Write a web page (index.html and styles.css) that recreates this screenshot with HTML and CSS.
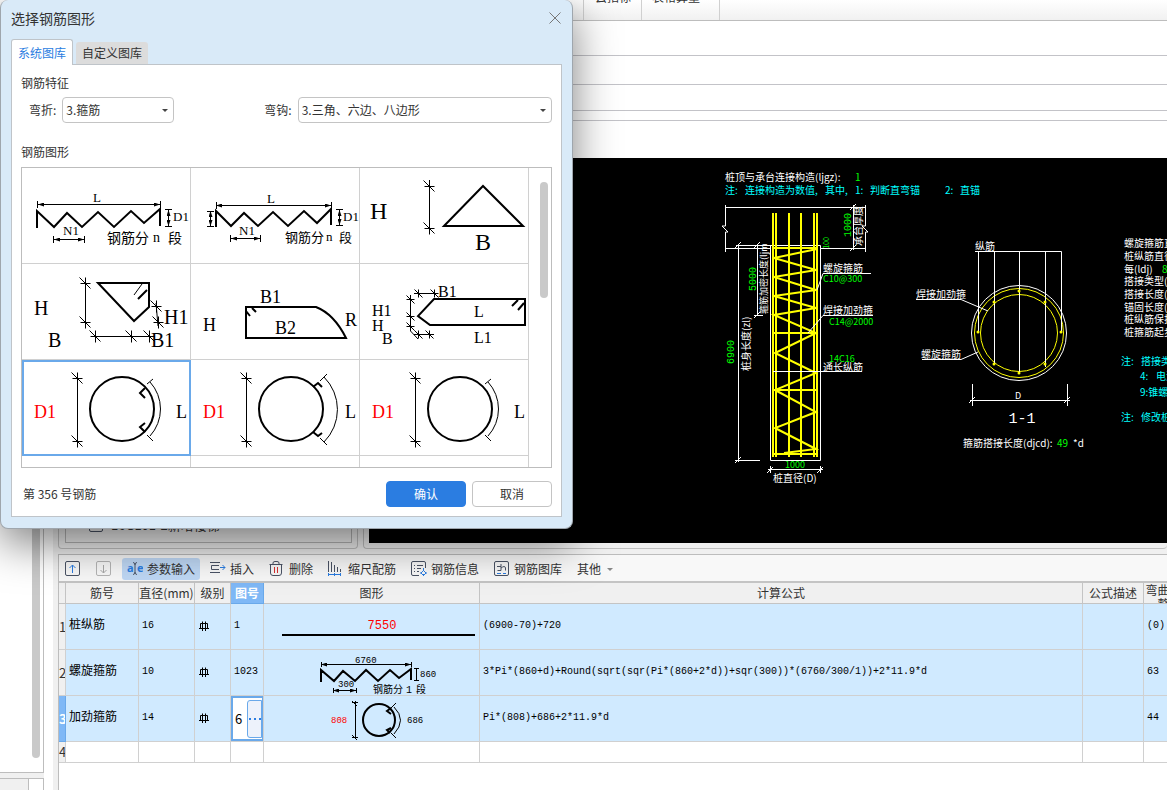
FILE: index.html
```html
<!DOCTYPE html>
<html lang="zh-CN">
<head>
    <meta charset="UTF-8">
    <title>选择钢筋图形</title>
    <link rel="stylesheet" href="styles.css">
</head>
<body>
    <!-- 公用尺寸标注符号 -->
    <svg class="defs" width="0" height="0">
        <defs>
            <g id="tick"><path d="M-5 0H5M0-6V6M-6-6L5 5"/></g>
            <g id="tick-s"><path d="M-4 0H4M0-4V4M-4-4L4 4"/></g>
            <g id="slash"><path d="M-3 3L3-3"/></g>
            <g id="level"><path d="M1.500 2.500H8.500V7.500H1.500ZM3.500.5V10M6.500.5V10M0 7.500H10"/></g>
            <marker id="arrow" viewBox="0 0 6 4" refX="6" refY="2" markerWidth="6" markerHeight="4" markerUnits="userSpaceOnUse" orient="auto-start-reverse"><path d="M0 0L6 2L0 4Z" fill="#000" stroke="none"/></marker>
        </defs>
    </svg>

    <div class="app">
        <div class="ribbon">
            <span class="ribbon-group">云指标</span>
            <span class="ribbon-group wide">表格算量</span>
        </div>
        <div class="strip strip-a"></div>
        <div class="strip strip-b"></div>
        <div class="strip strip-c"></div>
        <div class="strip strip-d"></div>

        <div class="work">
            <aside class="rail">
                <div class="rail-pane"><div class="rail-thumb"></div></div>
                <div class="rail-foot"><div class="rail-cell"></div></div>
            </aside>

            <main class="main">
                <div class="views">
                    <div class="panel tree-panel">
                        <div class="tree">
                            <label class="tree-row"><input type="checkbox">16G101-2新增楼梯</label>
                        </div>
                    </div>
                    <div class="panel cad-panel">
                        <svg class="cad" width="798" height="385" viewBox="369 158 798 385">
                            <text x="725" y="181">桩顶与承台连接构造(ljgz):<tspan class="g" x="855">1</tspan></text>
                            <text class="c" y="194"><tspan x="725">注:</tspan><tspan x="745">连接构造为数值,</tspan><tspan x="825">其中,</tspan><tspan x="855">1:</tspan><tspan x="870">判断直弯锚</tspan><tspan x="945">2:</tspan><tspan x="960">直锚</tspan></text>

                            <!-- 承台 -->
                            <path class="w" d="M725 207.500H865M725.500 205V226H722L728 232H725.500V252M865.500 205V226H862L868 232H865.500V252M725 248.500H771M821 248.500H865M853.500 205V250"/>
                            <use href="#slash" class="w" x="853" y="207"/><use href="#slash" class="w" x="853" y="248"/>
                            <text class="g mono" text-anchor="middle" transform="translate(851 225) rotate(-90)">1000</text>
                            <text text-anchor="middle" transform="translate(862 226) rotate(-90)">承台厚度</text>
                            <text class="g tiny" text-anchor="middle" transform="translate(829 243) rotate(-90)">100</text>

                            <!-- 桩身 -->
                            <path class="w" d="M770.500 245.500H820.500V460.500H770.500Z"/>
                            <path class="y" d="M773 213V457M776 213V457M789 213V457M801 213V457M814 213V457M817 213V457M773 248H817M773 333H817M773 390H817M773 454H817"/>
                            <path class="y" d="M817 249L774 258L816 270L774 277L816 290L774 296L816 308L774 315L816 333L775 353L816 373L775 390L816 412L775 428L816 449L784 453"/>
                            <path class="w" d="M736 245.500H771M738.500 244V462M735 460.500H760M757.500 245V316M754 315.500H763"/>
                            <use href="#slash" class="w" x="738" y="245"/><use href="#slash" class="w" x="757" y="245"/><use href="#slash" class="w" x="757" y="315"/><use href="#slash" class="w" x="738" y="460"/>
                            <text class="g mono" text-anchor="middle" transform="translate(756 279) rotate(-90)">5000</text>
                            <text class="g mono" text-anchor="middle" transform="translate(734 352) rotate(-90)">6900</text>
                            <text transform="translate(750 371) rotate(-90)">桩身长度(zl)</text>
                            <text class="small" transform="translate(767 314) rotate(-90)">箍筋加密长度(ljm</text>

                            <text x="823" y="272">螺旋箍筋</text>
                            <text class="g small" x="823" y="282">C10@300</text>
                            <text x="823" y="314">焊接加劲箍</text>
                            <text class="g small" x="829" y="325">C14@2000</text>
                            <text class="g small" x="829" y="362">14C16</text>
                            <text x="823" y="371">通长纵筋</text>
                            <path class="w" d="M871 273.500H823L817 290M873 315.500H823L808 333M773 371.500H862"/>

                            <path class="w" d="M768 469.500H823M770.500 466V473M820.500 466V473"/>
                            <use href="#slash" class="w" x="770" y="470"/><use href="#slash" class="w" x="820" y="470"/>
                            <text class="g small" x="785" y="468">1000</text>
                            <text x="773" y="482">桩直径(D)</text>

                            <!-- 1-1 剖面 -->
                            <text x="975" y="250">纵筋</text>
                            <circle class="w" cx="1019" cy="333" r="47.500"/>
                            <circle class="y1" cx="1019" cy="333" r="44.500"/>
                            <circle class="y1" cx="1019" cy="333" r="38.500"/>
                            <path class="w" d="M975 251.500H1061.500V333M978.500 251V333M994.500 251V365M1019.500 251V374M1045.500 251V367"/>
                            <path class="dots" d="M978 332v.1M994 302v.1M1019 291v.1M1045 302v.1M1061 332v.1M994 364v.1M1019 373v.1M1045 364v.1"/>
                            <text x="916" y="298">焊接加劲箍</text>
                            <text x="921" y="358">螺旋箍筋</text>
                            <path class="w" d="M916 299.500H961L988 311M922 359.500H961L978 352"/>
                            <path class="w" d="M970 400.500H1070M972.500 384V406M1067.500 384V406"/>
                            <use href="#slash" class="w" x="972" y="400"/><use href="#slash" class="w" x="1067" y="400"/>
                            <text class="small" x="1015" y="399">D</text>
                            <text class="big" x="1022" y="423" text-anchor="middle">1-1</text>
                            <text x="963" y="447">箍筋搭接长度(djcd):<tspan class="g" x="1057">49</tspan><tspan x="1073">*d</tspan></text>

                            <text x="1124" y="247">螺旋箍筋直径</text>
                            <text x="1124" y="260">桩纵筋直径</text>
                            <text x="1124" y="273">每(ldj) <tspan class="g" x="1162">8</tspan></text>
                            <text x="1124" y="285">搭接类型(lx)</text>
                            <text x="1124" y="298">搭接长度(ld)</text>
                            <text x="1124" y="311">锚固长度(la)</text>
                            <text x="1124" y="323">桩纵筋保护层</text>
                            <text x="1124" y="336">桩箍筋起步</text>
                            <text class="c" y="365"><tspan x="1121">注:</tspan><tspan x="1141">搭接类型</tspan></text>
                            <text class="c" y="380"><tspan x="1140">4:</tspan><tspan x="1156">电渣</tspan></text>
                            <text class="c" x="1140" y="396">9:锥螺纹</text>
                            <text class="c" y="421"><tspan x="1121">注:</tspan><tspan x="1141">修改桩</tspan></text>
                        </svg>
                    </div>
                </div>

                <div class="editor">
                    <div class="toolbar">
                        <button class="tool" aria-label="上移"><svg width="16" height="16" viewBox="0 0 16 16"><rect x=".5" y=".5" width="14" height="14" rx="1.500" stroke="#4a5365"/><path d="M7.500 12V4M4.500 7L7.500 4L10.500 7" stroke="#2b7de1"/></svg></button>
                        <button class="tool" aria-label="下移"><svg width="16" height="16" viewBox="0 0 16 16"><rect x=".5" y=".5" width="14" height="14" rx="1.500" stroke="#b5b5b5"/><path d="M7.500 4V12M4.500 9L7.500 12L10.500 9" stroke="#a8a8a8"/></svg></button>
                        <button class="tool active"><svg width="16" height="16" viewBox="0 0 16 16"><text x="0" y="11" class="ae">a</text><text x="10" y="11" class="ae">e</text><path d="M6 1.500Q8 1.500 8 4V11Q8 13.500 6 13.500M10 1.500Q8 1.500 8 4M8 11Q8 13.500 10 13.500" stroke="#4a5365"/></svg>参数输入</button>
                        <button class="tool"><svg width="16" height="16" viewBox="0 0 16 16"><path d="M0 1.500H10M0 11.500H10M9 4.500H1.500V8.500H9" stroke="#4a5365"/><path d="M10 6.500H15M12.500 4L15 6.500L12.500 9" stroke="#2b7de1"/></svg>插入</button>
                        <button class="tool"><svg width="16" height="16" viewBox="0 0 16 16"><path d="M.5 3.500H13.500M4 3V2Q4 .5 6 .5H8Q10 .5 10 2V3M1.500 4V12Q1.500 14.500 4 14.500H10Q12.500 14.500 12.500 12V4" stroke="#4a5365"/><path d="M5.500 6V12M8.500 6V12" stroke="#d93030"/></svg>删除</button>
                        <button class="tool"><svg width="16" height="16" viewBox="0 0 16 16"><path d="M.5 0V11M3.500 1V11M6.500 4V11M9.500 6V11M12.500 8V11" stroke="#4a5365"/><path d="M.5 12V15M6.500 12V15M12.500 12V15M0 13.500H13" stroke="#2b7de1"/></svg>缩尺配筋</button>
                        <button class="tool"><svg width="16" height="16" viewBox="0 0 16 16"><path d="M14.500 7V2Q14.500.5 13 .5H2Q.5.5.5 2V13Q.5 14.500 2 14.500H8M3 4.500H4M6 4.500H12M3 7.500H4M6 7.500H10M3 10.500H4M6 10.500H8" stroke="#4a5365"/><path d="M12.500 7V10M12.500 13V15M9 12H11M14 12H16M12.500 9.500L15 12L12.500 14.500L10 12Z" stroke="#2b7de1"/></svg>钢筋信息</button>
                        <button class="tool"><svg width="16" height="16" viewBox="0 0 16 16"><rect x=".5" y=".5" width="14" height="14" rx="1.500" stroke="#4a5365"/><path d="M3 5.500H7V9.500H3.500M7 3V5.500M7 7Q11 4 11.500 7V9.500" stroke="#4a5365"/><path d="M3 12.500H7M9 12.500H12" stroke="#2b7de1"/></svg>钢筋图库</button>
                        <button class="tool">其他<span class="caret"></span></button>
                    </div>

                    <table class="bars">
                        <colgroup>
                            <col class="c-idx"><col class="c-name"><col class="c-dia"><col class="c-level"><col class="c-code"><col class="c-shape"><col><col class="c-desc"><col class="c-adj">
                        </colgroup>
                        <thead>
                            <tr>
                                <th></th>
                                <th>筋号</th>
                                <th>直径(mm)</th>
                                <th>级别</th>
                                <th class="current">图号</th>
                                <th>图形</th>
                                <th>计算公式</th>
                                <th>公式描述</th>
                                <th><div class="two-line">弯曲调整</div></th>
                            </tr>
                        </thead>
                        <tbody>
                            <tr>
                                <th scope="row">1</th>
                                <td>桩纵筋</td>
                                <td>16</td>
                                <td><svg class="level" width="11" height="11"><use href="#level"/></svg></td>
                                <td>1</td>
                                <td class="shape"><svg width="215" height="45" viewBox="264 604 215 45">
                                    <text class="r" x="382" y="629" font-size="12" text-anchor="middle">7550</text>
                                    <path class="bar" d="M282 635H475"/>
                                </svg></td>
                                <td>(6900-70)+720</td>
                                <td></td>
                                <td>(0)</td>
                            </tr>
                            <tr>
                                <th scope="row">2</th>
                                <td>螺旋箍筋</td>
                                <td>10</td>
                                <td><svg class="level" width="11" height="11"><use href="#level"/></svg></td>
                                <td>1023</td>
                                <td class="shape"><svg width="215" height="45" viewBox="264 650 215 45">
                                    <path class="dim arrows" d="M321 664.500H411"/>
                                    <path class="dim arrows" d="M333 690.500H356"/>
                                    <path class="dim" d="M321.500 662V667M411.500 662V667M333.500 688V693M356.500 688V693M416.500 669V680M414 668.500H419M414 680.500H419"/>
                                    <path class="bar" d="M321 682V670L334 681L343 671L355 681L366 670L378 681L390 670L399 678L411 669V680"/>
                                    <text x="355" y="663" font-size="9">6760</text>
                                    <text x="338" y="687" font-size="9">300</text>
                                    <text x="420" y="677" font-size="9">860</text>
                                    <text y="693" font-size="10"><tspan x="373">钢筋分</tspan><tspan x="406">1</tspan><tspan x="416">段</tspan></text>
                                </svg></td>
                                <td>3*Pi*(860+d)+Round(sqrt(sqr(Pi*(860+2*d))+sqr(300))*(6760/300/1))+2*11.9*d</td>
                                <td></td>
                                <td>63</td>
                            </tr>
                            <tr>
                                <th scope="row" class="current">3</th>
                                <td>加劲箍筋</td>
                                <td>14</td>
                                <td><svg class="level" width="11" height="11"><use href="#level"/></svg></td>
                                <td class="editing"><div class="cell-edit"><input type="text" value="6" aria-label="图号"><button aria-label="选择图形"><svg width="12" height="2" viewBox="0 0 12 2"><path d="M0 1H2M5 1H7M10 1H12"/></svg></button></div></td>
                                <td class="shape"><svg width="215" height="45" viewBox="264 696 215 45">
                                    <text class="r" x="331" y="723" font-size="9">808</text>
                                    <path class="dim" d="M355.500 701V739M352 702.500H358M352 737.500H358M352 701L357 706M352 735L357 740"/>
                                    <circle class="bar" cx="379" cy="720" r="16"/>
                                    <path class="bar" d="M391 708L387 711L391 714M391 728L387 730L390 733"/>
                                    <path class="dim" d="M394 707Q407 720 394 734M391 708L396 703M391 733L396 738"/>
                                    <text x="407" y="723" font-size="9">686</text>
                                </svg></td>
                                <td>Pi*(808)+686+2*11.9*d</td>
                                <td></td>
                                <td>44</td>
                            </tr>
                            <tr class="blank">
                                <th scope="row">4</th>
                                <td></td><td></td><td></td><td></td><td></td><td></td><td></td><td></td>
                            </tr>
                        </tbody>
                    </table>
                </div>
            </main>
        </div>
    </div>

    <div class="dialog" role="dialog" aria-labelledby="dialogTitle">
        <div class="dialog-title">
            <span id="dialogTitle">选择钢筋图形</span>
            <button class="close" aria-label="关闭"><svg width="12" height="12" viewBox="0 0 12 12"><path d="M.5.5L11.500 11.500M11.500.5L.5 11.500"/></svg></button>
        </div>
        <div class="tabs">
            <button class="tab selected">系统图库</button>
            <button class="tab">自定义图库</button>
        </div>
        <div class="dialog-body">
            <div class="caption">钢筋特征</div>
            <div class="filters">
                <label for="bend">弯折:</label>
                <span class="select short"><select id="bend"><option>3.箍筋</option></select></span>
                <label for="hook" class="hook-label">弯钩:</label>
                <span class="select"><select id="hook"><option>3.三角、六边、八边形</option></select></span>
            </div>
            <div class="caption lower">钢筋图形</div>

            <div class="gallery">
                <div class="shapes">
                    <div class="cell"><svg width="168" height="95" viewBox="22 168 168 95">
                        <path class="dim arrows" d="M38 204.500H160"/>
                        <path class="dim arrows" d="M54 239.500H84"/>
                        <path class="dim arrows" d="M168.500 210V226"/>
                        <path class="dim" d="M37.500 201V208M160.500 201V208M53.500 236V243M84.500 236V243M165 209.500H172M165 226.500H172"/>
                        <path class="bar" d="M37 228V211L54 227L67 213L82 227L98 212L114 227L131 211L144 223L160 209V226"/>
                        <text x="93" y="202" font-size="13">L</text>
                        <text x="63" y="235" font-size="13">N1</text>
                        <text x="173" y="221" font-size="13">D1</text>
                        <text y="243" font-size="14"><tspan x="107">钢筋分</tspan><tspan x="153" dy="-1">n</tspan><tspan x="168" dy="1">段</tspan></text>
                    </svg></div>
                    <div class="cell"><svg width="168" height="95" viewBox="191 168 168 95">
                        <path class="dim arrows" d="M216 205.500H331"/>
                        <path class="dim arrows" d="M231 238.500H260"/>
                        <path class="dim arrows" d="M210.500 211V226"/>
                        <path class="dim arrows" d="M339.500 210V225"/>
                        <path class="dim" d="M216.500 202V209M331.500 202V209M230.500 235V242M260.500 235V242M207 211.500H214M207 226.500H214M336 209.500H343M336 225.500H343"/>
                        <path class="bar" d="M216 227V211L231 226L244 213L258 226L273 212L288 226L304 211L317 223L331 209V225"/>
                        <text x="267" y="203" font-size="13">L</text>
                        <text x="239" y="235" font-size="13">N1</text>
                        <text x="343" y="221" font-size="13">D1</text>
                        <text y="242" font-size="13"><tspan x="285">钢筋分</tspan><tspan x="326" dy="-1">n</tspan><tspan x="339" dy="1">段</tspan></text>
                    </svg></div>
                    <div class="cell"><svg width="168" height="95" viewBox="360 168 168 95">
                        <path class="dim" d="M429.500 180V233"/>
                        <use href="#tick" class="dim" x="429.500" y="186.500"/><use href="#tick" class="dim" x="429.500" y="228.500"/>
                        <path class="bar" d="M444 226L483 186L523 226Z"/>
                        <text x="370" y="219" font-size="24">H</text>
                        <text x="475" y="250" font-size="24">B</text>
                    </svg></div>
                    <div class="cell"><svg width="168" height="95" viewBox="22 264 168 95">
                        <path class="dim" d="M85.500 278V327M156 303L158 326M91 336.500H153"/>
                        <use href="#tick" class="dim" x="85.500" y="283.500"/><use href="#tick" class="dim" x="85.500" y="322.500"/>
                        <use href="#tick" class="dim" x="156.500" y="306.500"/><use href="#tick" class="dim" x="158.500" y="322.500"/>
                        <use href="#tick" class="dim" x="95.500" y="336.500"/><use href="#tick" class="dim" x="131.500" y="336.500"/><use href="#tick" class="dim" x="149.500" y="336.500"/>
                        <path class="bar" d="M98 283H149V307L134 321ZM138 299L147 290"/>
                        <path class="dim" d="M134 295L142 284"/>
                        <text x="34" y="315" font-size="20">H</text>
                        <text x="48" y="347" font-size="20">B</text>
                        <text x="164" y="324" font-size="20">H1</text>
                        <text x="151" y="347" font-size="20">B1</text>
                    </svg></div>
                    <div class="cell"><svg width="168" height="95" viewBox="191 264 168 95">
                        <path class="bar" d="M246 307H316Q334 314 346 338H246ZM246 311L250 316M252 308L256 312"/>
                        <text x="260" y="303" font-size="18">B1</text>
                        <text x="203" y="331" font-size="18">H</text>
                        <text x="275" y="334" font-size="18">B2</text>
                        <text x="345" y="326" font-size="18">R</text>
                    </svg></div>
                    <div class="cell"><svg width="168" height="95" viewBox="360 264 168 95">
                        <path class="dim" d="M414 293.500H438M410.500 295V331L418 339M414 334.500H434"/>
                        <use href="#tick-s" class="dim" x="418.500" y="293.500"/><use href="#tick-s" class="dim" x="434.500" y="293.500"/>
                        <use href="#tick-s" class="dim" x="410.500" y="299.500"/><use href="#tick-s" class="dim" x="410.500" y="316.500"/><use href="#tick-s" class="dim" x="410.500" y="326.500"/>
                        <use href="#tick-s" class="dim" x="418.500" y="334.500"/><use href="#tick-s" class="dim" x="429.500" y="334.500"/>
                        <path class="bar" d="M434 299H525V325H430L418 316ZM512 306L518 300M518 310L524 303"/>
                        <text x="438" y="297" font-size="16">B1</text>
                        <text x="372" y="316" font-size="16">H1</text>
                        <text x="372" y="331" font-size="16">H</text>
                        <text x="382" y="344" font-size="16">B</text>
                        <text x="474" y="317" font-size="16">L</text>
                        <text x="474" y="343" font-size="16">L1</text>
                    </svg></div>
                    <div class="cell chosen"><svg width="168" height="95" viewBox="22 360 168 95">
                        <path class="dim" d="M77.500 373V445"/>
                        <use href="#tick" class="dim" x="77.500" y="378.500"/><use href="#tick" class="dim" x="77.500" y="441.500"/>
                        <circle class="bar" cx="122" cy="409" r="32"/>
                        <path class="bar" d="M145 388L140 393L145 398M145 423L140 427L145 432"/>
                        <path class="dim" d="M150 382A40 40 0 0 1 150 436M147 384L153 379M147 435L153 441"/>
                        <text class="r" x="34" y="418" font-size="18">D1</text>
                        <text x="176" y="418" font-size="18">L</text>
                    </svg></div>
                    <div class="cell"><svg width="168" height="95" viewBox="191 360 168 95">
                        <path class="dim" d="M246.500 373V445"/>
                        <use href="#tick" class="dim" x="246.500" y="378.500"/><use href="#tick" class="dim" x="246.500" y="441.500"/>
                        <circle class="bar" cx="291" cy="409" r="32"/>
                        <path class="bar" d="M313 387L318 383L322 387M313 432L318 436L322 433"/>
                        <path class="dim" d="M324 377A46 46 0 0 1 324 442M320 381L327 374M320 438L327 445"/>
                        <text class="r" x="203" y="418" font-size="18">D1</text>
                        <text x="345" y="418" font-size="18">L</text>
                    </svg></div>
                    <div class="cell"><svg width="168" height="95" viewBox="360 360 168 95">
                        <path class="dim" d="M415.500 373V445"/>
                        <use href="#tick" class="dim" x="415.500" y="378.500"/><use href="#tick" class="dim" x="415.500" y="441.500"/>
                        <circle class="bar" cx="460" cy="409" r="32"/>
                        <path class="dim" d="M488 382A40 40 0 0 1 488 436M485 384L491 379M485 435L491 441"/>
                        <text class="r" x="372" y="418" font-size="18">D1</text>
                        <text x="514" y="418" font-size="18">L</text>
                    </svg></div>
                    <div class="cell"></div>
                    <div class="cell"></div>
                    <div class="cell"></div>
                </div>
                <div class="scroll"><div class="thumb"></div></div>
            </div>

            <div class="actions">
                <span class="status">第 356 号钢筋</span>
                <button class="btn primary">确认</button>
                <button class="btn">取消</button>
            </div>
        </div>
    </div>
</body>
</html>
```

FILE: styles.css
```css
* {
    box-sizing: border-box;
}
body {
    margin: 0;
    font-family: "Noto Sans CJK SC", sans-serif;
    font-size: 12px;
    line-height: 18px;
    color: #333;
    background: #fff;
    overflow: hidden;
}
button, input, select {
    font: inherit;
    color: inherit;
}
svg {
    display: block;
    fill: none;
}
.defs {
    position: absolute;
}
.app {
    display: flex;
    flex-direction: column;
    height: 100vh;
    overflow: hidden;
}

/* 顶部功能区 */
.ribbon {
    display: flex;
    align-items: flex-end;
    height: 21px;
    padding-left: 583px;
    background: linear-gradient(#fff, #f1f1f1);
    border-bottom: 1px solid #bdbdbd;
    overflow: hidden;
}
.ribbon-group {
    flex: none;
    width: 59px;
    height: 34px;
    padding-left: 11px;
    border-left: 1px solid #d0d0d0;
    border-right: 1px solid #d0d0d0;
    line-height: 22px;
    white-space: nowrap;
}
.ribbon-group.wide {
    width: 78px;
    padding-left: 10px;
    border-left: none;
}
.strip {
    flex: none;
    border-bottom: 1px solid #c3c3c8;
}
.strip-a { height: 35px; }
.strip-b { height: 29px; }
.strip-c { height: 26px; }
.strip-d { height: 10px; }

.work {
    display: flex;
    flex: 1;
    min-height: 0;
    padding-top: 37px;
}
.rail {
    display: flex;
    flex-direction: column;
    flex: none;
    gap: 5px;
    width: 44px;
    background: #f0f0f0;
}
.rail-pane {
    display: flex;
    flex: 1;
    justify-content: flex-end;
    padding: 0 3px 14px 0;
    background: #fff;
    border-right: 1px solid #bdbdbd;
    border-bottom: 1px solid #bdbdbd;
}
.rail-thumb {
    width: 8px;
    background: #c9c9c9;
    border-radius: 4px;
}
.rail-foot {
    height: 12px;
    background: #fff;
    border: 1px solid #bdbdbd;
    border-width: 1px 1px 0 0;
}
.rail-cell {
    width: 29px;
    height: 100%;
    background: #f0f0f0;
    border-right: 1px solid #bdbdbd;
}
.main {
    display: flex;
    flex: 1;
    flex-direction: column;
    gap: 5px;
    min-width: 0;
    margin-left: 9px;
    padding-left: 5px;
    background: #f0f0f0;
}
.views {
    display: flex;
    gap: 5px;
}
.panel {
    padding: 0 5px 5px;
    border: 1px solid #c0c0c0;
    border-top: none;
    border-radius: 0 0 4px 4px;
}
.tree-panel {
    display: flex;
    width: 300px;
    padding-left: 6px;
}
.tree {
    display: flex;
    flex: 1;
    align-items: flex-end;
    padding: 0 0 8px 23px;
    border: 1px solid #b5b5b5;
}
.tree-row {
    display: flex;
    align-items: center;
    gap: 8px;
    font-size: 13px;
}
.tree-row input {
    appearance: none;
    width: 14px;
    height: 14px;
    margin: 0;
    border: 1px solid #4a5365;
    border-radius: 2px;
}
.cad-panel {
    flex: 1;
    min-width: 0;
    padding-right: 0;
    border-right: none;
    overflow: hidden;
}
.cad {
    background: #000;
    font-size: 10px;
}

/* CAD 图纸 */
.cad text { fill: #fff; }
.cad .g { fill: #0f0; }
.cad .c { fill: #0ff; }
.cad .mono { font-family: "Liberation Mono", monospace; }
.cad .small { font-size: 9px; }
.cad .tiny { font-size: 7px; }
.cad .big { font: 15px "Liberation Mono", monospace; }
.cad .w { stroke: #fff; }
.cad .y { stroke: #ff0; stroke-width: 2; }
.cad .y1 { stroke: #ff0; }
.cad .dots { stroke: #ff0; stroke-width: 3; stroke-linecap: round; }

/* 工具栏 */
.editor {
    flex: 1;
    background: #fff;
    border-left: 1px solid #bdbdbd;
    border-top: 1px solid #bdbdbd;
    overflow: hidden;
}
.toolbar {
    display: flex;
    align-items: center;
    gap: 5px;
    height: 28px;
    padding: 2px 0 0 1px;
    background: #f8f8f8;
    border-bottom: 2px solid #c4c4c4;
}
.tool {
    display: flex;
    align-items: center;
    gap: 4px;
    height: 22px;
    padding: 0 5px;
    background: none;
    border: none;
    border-radius: 3px;
    white-space: nowrap;
}
.tool.active {
    background: #bfd8f5;
}
.ae {
    fill: #2b7de1;
    font: bold 11px "Open Sans", sans-serif;
}
.caret {
    margin-left: 2px;
    border: 3px solid transparent;
    border-top-color: #888;
    border-bottom: none;
}

/* 钢筋表格 */
.bars {
    width: calc(100% + 17px);
    table-layout: fixed;
    border-collapse: separate;
    border-spacing: 0;
}
.c-idx { width: 7px; }
.c-name { width: 73px; }
.c-dia { width: 56px; }
.c-level { width: 36px; }
.c-code { width: 33px; }
.c-shape { width: 216px; }
.c-desc { width: 61px; }
.c-adj { width: 40px; }
.bars th, .bars td {
    padding: 0;
    border-right: 1px solid #d0d0d0;
    border-bottom: 1px solid #d0d0d0;
    white-space: nowrap;
    overflow: hidden;
}
.bars th {
    background: #f0f0f0;
    font-weight: normal;
}
.bars thead th {
    height: 21px;
    border-color: #c4c4c4;
}
.bars tbody th {
    font-size: 13px;
}
.bars thead th.current, .bars tbody th.current {
    background: #7fb8f6;
    border-color: #6aa9ea;
    color: #fff;
    font-weight: bold;
}
.bars td {
    height: 46px;
    padding: 0 3px 2px 3px;
    background: #d0eaff;
    color: #000;
    font-family: "Liberation Mono", "Noto Sans CJK SC", monospace;
    font-size: 10px;
}
.bars td:nth-child(2) {
    font-size: 12px;
}
.bars td.shape, .bars td.editing {
    padding: 0;
}
.bars .blank td {
    height: 21px;
    background: #fff;
}
.two-line {
    height: 20px;
    line-height: 14px;
    white-space: normal;
    margin-top: -1px;
}
.level {
    margin: 2px 0 0 1px;
    stroke: #000;
}
.cell-edit {
    display: flex;
    align-items: center;
    height: 45px;
    padding: 2px 0 2px 2px;
    background: #fff;
    border: 2px solid #6aa9ea;
    border-right-width: 1px;
}
.cell-edit input {
    flex: 1;
    width: 12px;
    padding: 0;
    border: none;
    outline: none;
    background: none;
    font-family: "Noto Sans CJK SC", sans-serif;
    font-size: 13px;
}
.cell-edit button {
    display: flex;
    align-items: center;
    justify-content: center;
    width: 16px;
    height: 38px;
    padding: 0;
    background: #edf2fb;
    border: 1px solid #6aa9ea;
    border-radius: 3px 0 0 3px;
    stroke: #2b7de1;
    stroke-width: 2;
}

/* 钢筋图形 */
.shape text {
    fill: #000;
    font-family: "Liberation Mono", "Noto Sans CJK SC", monospace;
}
.cell text {
    fill: #000;
    font-family: "Liberation Serif", "Noto Sans CJK SC", serif;
}
.cell .r, .shape .r { fill: #f00; }
.dim { stroke: #000; }
.arrows {
    marker-start: url(#arrow);
    marker-end: url(#arrow);
}
.bar {
    stroke: #000;
    stroke-width: 2;
}

/* 弹窗 */
.dialog {
    position: absolute;
    top: 0;
    left: 0;
    width: 573px;
    max-width: 100%;
    padding: 0 10px 11px 10px;
    background: #d9eaf8;
    border: 1px solid #9fa6ad;
    border-top: none;
    border-radius: 8px;
    box-shadow: 0 14px 44px rgba(0, 0, 0, 0.5);
}
.dialog-title {
    display: flex;
    align-items: center;
    justify-content: space-between;
    height: 39px;
    padding: 0 1px 3px 0;
    font-size: 14px;
}
.close {
    padding: 0;
    background: none;
    border: none;
    stroke: #777;
}
.tabs {
    display: flex;
    align-items: flex-end;
    gap: 3px;
}
.tab {
    height: 22px;
    padding: 0 6px;
    background: #dcdcdc;
    border: none;
    border-radius: 3px 3px 0 0;
}
.tab.selected {
    height: 26px;
    margin-bottom: -1px;
    background: #fff;
    border: 1px solid #bfc4c9;
    border-bottom: none;
    color: #2b7de1;
    z-index: 1;
}
.dialog-body {
    padding: 9px;
    background: #fff;
    border: 1px solid #bfc4c9;
}
.filters {
    display: flex;
    align-items: center;
    gap: 6px;
    margin-top: 5px;
    padding-left: 8px;
}
.select {
    display: flex;
    flex: 1;
    align-items: center;
    height: 26px;
    border: 1px solid #c4c4c4;
    border-radius: 4px;
}
.select.short {
    flex: none;
    width: 112px;
}
.select::after {
    content: "";
    margin-right: 5px;
    border: 3px solid transparent;
    border-top-color: #444;
    border-bottom: none;
}
.select select {
    appearance: none;
    flex: 1;
    min-width: 0;
    padding: 0 3px;
    background: none;
    border: none;
    outline: none;
}
.hook-label {
    margin-left: 84px;
}
.caption.lower {
    margin: 20px 0 6px;
}
.gallery {
    display: flex;
    height: 301px;
    border: 1px solid #bdbdbd;
    overflow: hidden;
}
.shapes {
    display: grid;
    flex: none;
    grid-template-columns: repeat(3, 169px);
    grid-auto-rows: 96px;
}
.cell {
    border-right: 1px solid #d0d0d0;
    border-bottom: 1px solid #d0d0d0;
}
.cell.chosen {
    outline: 2px solid #6aa9ea;
    outline-offset: -2px;
}
.scroll {
    flex: 1;
    padding: 14px 3px 0 11px;
}
.thumb {
    height: 116px;
    background: #c9c9c9;
    border-radius: 4px;
}
.actions {
    display: flex;
    align-items: center;
    gap: 6px;
    margin-top: 13px;
}
.status {
    flex: 1;
    padding-left: 2px;
}
.btn {
    width: 80px;
    height: 26px;
    padding: 0;
    background: #fff;
    border: 1px solid #c4c4c4;
    border-radius: 4px;
}
.btn.primary {
    background: #2b7de1;
    border-color: #2b7de1;
    color: #fff;
}
```
